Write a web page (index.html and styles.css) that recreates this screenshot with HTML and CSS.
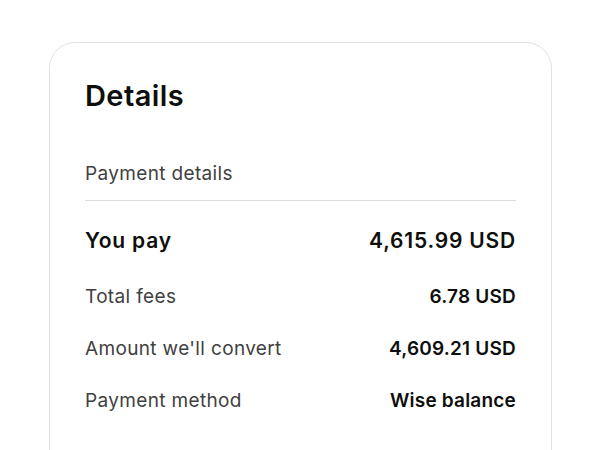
FILE: index.html
```html
<!DOCTYPE html>
<html lang="en">
<head>
<meta charset="utf-8">
<title>Details</title>
<link rel="stylesheet" href="styles.css">
</head>
<body>
  <section class="card">
    <h1 class="title">Details</h1>
    <h2 class="section-label">Payment details</h2>
    <dl class="rows">
      <div class="row row-main">
        <dt>You pay</dt>
        <dd>4,615.99 USD</dd>
      </div>
      <div class="row">
        <dt>Total fees</dt>
        <dd>6.78 USD</dd>
      </div>
      <div class="row">
        <dt>Amount we'll convert</dt>
        <dd>4,609.21 USD</dd>
      </div>
      <div class="row">
        <dt>Payment method</dt>
        <dd>Wise balance</dd>
      </div>
    </dl>
  </section>
</body>
</html>
```

FILE: styles.css
```css
* {
  box-sizing: border-box;
}

html, body {
  margin: 0;
  padding: 0;
  background: #ffffff;
  height: 100%;
  overflow: hidden;
}

body {
  font-family: "Inter", "Noto Sans", sans-serif;
  color: #0e0f0c;
  padding: 42px 48px 0 49px;
}

.card {
  border: 1px solid #e2e2e2;
  border-radius: 26px;
  padding: 36px 35px 60px 35px;
  min-height: 500px;
}

.title {
  margin: 0;
  font-size: 29px;
  line-height: 34px;
  font-weight: 600;
  letter-spacing: 0.4px;
}

.section-label {
  margin: 49px 0 0 0;
  padding-bottom: 14px;
  border-bottom: 1px solid #dcdcdc;
  font-size: 19px;
  line-height: 24px;
  font-weight: 400;
  letter-spacing: 0.35px;
  color: #3f413f;
}

.rows {
  margin: 26px 0 0 0;
  display: flex;
  flex-direction: column;
  gap: 28px;
}

.row {
  display: flex;
  justify-content: space-between;
  align-items: center;
  font-size: 19px;
  line-height: 24px;
}

.row dt {
  color: #3f413f;
  font-weight: 400;
  letter-spacing: 0.35px;
}

.row dd {
  margin: 0;
  font-weight: 600;
  color: #0e0f0c;
  letter-spacing: 0.2px;
}

.row-main {
  font-size: 21px;
  line-height: 28px;
  margin-bottom: 2px;
}

.row-main dt,
.row-main dd {
  color: #0e0f0c;
  font-weight: 600;
  letter-spacing: 0.8px;
}
```
